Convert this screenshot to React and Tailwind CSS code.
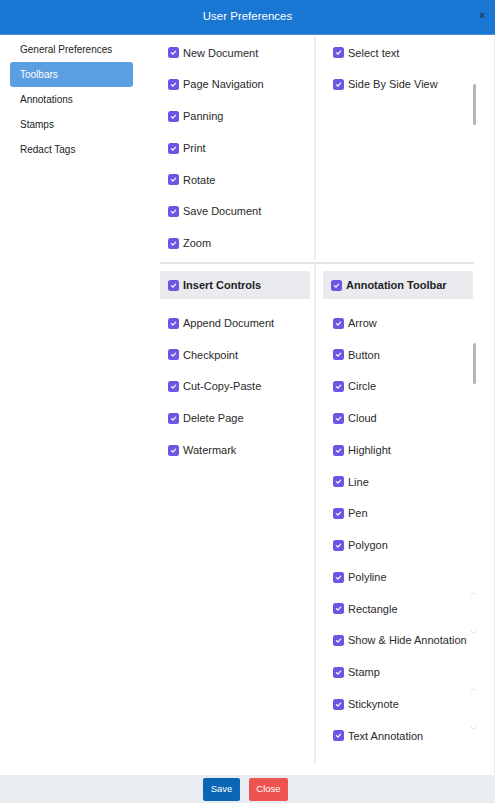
import {useState} from "react";

const topLeft = ["New Document", "Page Navigation", "Panning", "Print", "Rotate", "Save Document", "Zoom"];
const topRight = ["Select text", "Side By Side View"];
const insertControls = ["Append Document", "Checkpoint", "Cut-Copy-Paste", "Delete Page", "Watermark"];
const annotationTools = [
    "Arrow", "Button", "Circle", "Cloud", "Highlight", "Line", "Pen", "Polygon", "Polyline",
    "Rectangle", "Show & Hide Annotation", "Stamp", "Stickynote", "Text Annotation",
];
const menu = ["General Preferences", "Toolbars", "Annotations", "Stamps", "Redact Tags"];

const Check = () => (
    <span className="w-[11px] h-[11px] rounded-[2.5px] bg-[#6b55e3] flex items-center justify-center shrink-0">
        <svg width="7" height="7" viewBox="0 0 10 10" fill="none">
            <path d="M2 5.2 L4.2 7.3 L8 3" stroke="white" strokeWidth="1.8" strokeLinecap="round" strokeLinejoin="round"/>
        </svg>
    </span>
);

const Item = ({label, pad = "pl-[8px]"}) => (
    <div className={`h-[31.75px] flex items-center gap-[4px] ${pad}`}>
        <Check/>
        <span className="text-[11px] text-[#2a2a2a]">{label}</span>
    </div>
);

const GroupHeader = ({label}) => (
    <div className="h-[28px] w-[150px] bg-[#e9ebef] flex items-center gap-[4px] pl-[8px]">
        <Check/>
        <span className="text-[11px] font-bold text-[#222]">{label}</span>
    </div>
);

// faint scroll arrows left over in the annotation list
const Chevron = ({up, top}) => (
    <svg className="absolute left-[320px]" style={{top}} width="7" height="5" viewBox="0 0 7 5" fill="none">
        <path d={up ? "M1 4 L3.5 1.5 L6 4" : "M1 1 L3.5 3.5 L6 1"} stroke="#d9d9d9" strokeWidth="1"/>
    </svg>
);

export default function App() {
    const [active, setActive] = useState("Toolbars");

    return (
        <div className="w-[495px] h-[803px] flex flex-col bg-white font-['Liberation_Sans',Arial,sans-serif] overflow-hidden">
            <div className="h-[35px] bg-[#1976d2] border-b border-[#4d93dc] flex items-center justify-center relative shrink-0">
                <span className="text-[11.5px] text-white">User Preferences</span>
                <span className="absolute right-[10px] top-[11px] text-[10px] font-bold leading-none text-[#243a52]">×</span>
            </div>

            <div className="flex-1 flex min-h-0 border-r border-[#ececec]">
                <div className="w-[150px] shrink-0 pt-[2px] pl-[10px]">
                    {menu.map((m) => (
                        <div
                            key={m}
                            onClick={() => setActive(m)}
                            className={`w-[123px] h-[25px] flex items-center pl-[10px] rounded-[3px] text-[10px] cursor-pointer ${
                                active === m ? "bg-[#5b9ee2] text-white" : "text-[#222]"
                            }`}
                        >
                            {m}
                        </div>
                    ))}
                </div>

                <div className="flex-1 relative pl-[10px] pt-[2px]">
                    <div className="w-[314px] flex border-b-2 border-[#e2e4e8] pb-[3px]">
                        <div className="w-[156px] border-r-2 border-[#eceef1]">
                            {topLeft.map((t) => <Item key={t} label={t}/>)}
                        </div>
                        <div className="flex-1">
                            {topRight.map((t) => <Item key={t} label={t} pad="pl-[17px]"/>)}
                        </div>
                    </div>

                    <div className="w-[314px] flex">
                        <div className="w-[156px] border-r-2 border-[#eceef1] pt-[7px] h-[205px]">
                            <GroupHeader label="Insert Controls"/>
                            <div className="h-[8px]"/>
                            {insertControls.map((t) => <Item key={t} label={t}/>)}
                        </div>
                        <div className="flex-1 pt-[7px] pl-[7px]">
                            <GroupHeader label="Annotation Toolbar"/>
                            <div className="h-[8px]"/>
                            <div className="-ml-[7px]">
                                {annotationTools.map((t) => <Item key={t} label={t} pad="pl-[17px]"/>)}
                            </div>
                        </div>
                    </div>

                    <div className="absolute left-[164px] top-[431px] w-[2px] h-[298px] bg-[#eceef1]"/>

                    <div className="absolute left-[323px] top-[49px] w-[3px] h-[41px] rounded-full bg-[#b4b6b9]"/>
                    <div className="absolute left-[323px] top-[308px] w-[3px] h-[41px] rounded-full bg-[#b4b6b9]"/>

                    <Chevron up top={556}/>
                    <Chevron top={595}/>
                    <Chevron up top={652}/>
                    <Chevron top={691}/>
                </div>
            </div>

            <div className="h-[28px] bg-[#e9ecf0] flex justify-center items-start pt-[3px] pr-[4px] gap-[9px] shrink-0">
                <button className="w-[37px] h-[23px] bg-[#0b66b6] text-white text-[9.5px] rounded-[2px]">Save</button>
                <button className="w-[39px] h-[23px] bg-[#ef5350] text-white text-[9.5px] rounded-[2px]">Close</button>
            </div>
        </div>
    );
}
